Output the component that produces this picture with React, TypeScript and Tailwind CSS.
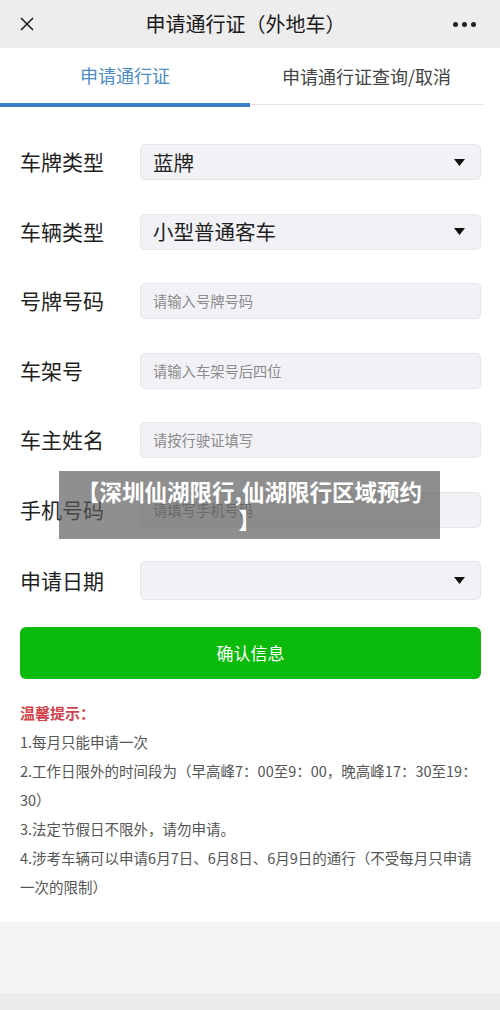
import { X } from "lucide-react"

const FONT = { fontFamily: '"Noto Sans CJK SC", "Noto Sans", sans-serif' }

type Row = {
  label: string
  kind: "select" | "input"
  value?: string
  placeholder?: string
}

const ROWS: Row[] = [
  { label: "车牌类型", kind: "select", value: "蓝牌" },
  { label: "车辆类型", kind: "select", value: "小型普通客车" },
  { label: "号牌号码", kind: "input", placeholder: "请输入号牌号码" },
  { label: "车架号", kind: "input", placeholder: "请输入车架号后四位" },
  { label: "车主姓名", kind: "input", placeholder: "请按行驶证填写" },
  { label: "手机号码", kind: "input", placeholder: "请填写手机号码" },
  { label: "申请日期", kind: "select", value: "" },
]

function Caret() {
  return (
    <svg width="11" height="7" viewBox="0 0 11 7" className="shrink-0">
      <path d="M0 0 L11 0 L5.5 7 Z" fill="#111" />
    </svg>
  )
}

function FormRow({ row, last }: { row: Row; last: boolean }) {
  return (
    <div className="flex items-center">
      <div className="w-[120px] shrink-0 text-[21px] text-[#1f1f1f]">{row.label}</div>
      <div
        className={`flex flex-1 items-center justify-between rounded-[5px] border border-[#e6e6ec] bg-[#f2f2f6] pl-[12px] pr-[15px] ${
          last ? "h-[39px]" : "h-[36px]"
        }`}
      >
        {row.kind === "select" ? (
          <>
            <span className="text-[20.5px] text-[#1f1f1f]">{row.value}</span>
            <Caret />
          </>
        ) : (
          <span className="text-[14.3px] text-[#8a8a8a]">{row.placeholder}</span>
        )}
      </div>
    </div>
  )
}

export default function App() {
  return (
    <div className="relative flex h-[1010px] w-[500px] flex-col overflow-hidden bg-white" style={FONT}>
      {/* Top bar */}
      <div className="flex h-[48px] shrink-0 items-center justify-between bg-[#ededed] px-[16px]">
        <X className="h-[22px] w-[22px] text-[#222]" strokeWidth={1.8} />
        <div className="text-[20px] text-[#1a1a1a]">申请通行证（外地车）</div>
        <div className="flex gap-[4px] pr-[8px]">
          <span className="h-[5px] w-[5px] rounded-full bg-[#222]" />
          <span className="h-[5px] w-[5px] rounded-full bg-[#222]" />
          <span className="h-[5px] w-[5px] rounded-full bg-[#222]" />
        </div>
      </div>

      {/* Tabs */}
      <div className="flex h-[59px] shrink-0 pr-[17px]">
        <div className="flex w-[250px] flex-col">
          <div className="flex flex-1 items-center justify-center text-[18px] text-[#4b8cc6]">
            申请通行证
          </div>
          <div className="h-[4px] bg-[#3e7ec8]" />
        </div>
        <div className="flex flex-1 flex-col">
          <div className="flex flex-1 items-center justify-center text-[18px] text-[#444]">
            申请通行证查询/取消
          </div>
          <div className="h-[1px] bg-[#e3e3e3]" />
          <div className="h-[2px]" />
        </div>
      </div>

      {/* Form */}
      <div className="flex flex-col gap-[33.5px] px-[20px] pt-[37px] pr-[19px]">
        {ROWS.map((row, i) => (
          <FormRow key={row.label} row={row} last={i === ROWS.length - 1} />
        ))}
      </div>

      <div className="px-[20px] pr-[19px] pt-[27px]">
        <button
          type="button"
          className="flex h-[52px] w-full items-center justify-center rounded-[6px] bg-[#0bbb0b] text-[17px] text-white"
        >
          确认信息
        </button>
      </div>

      {/* Notes */}
      <div className="flex-1 px-[20px] pt-[19px] text-[14.5px] leading-[29px] text-[#555]">
        <div className="text-[15px] font-bold text-[#d2424b]">温馨提示：</div>
        <div className="whitespace-nowrap">1.每月只能申请一次</div>
        <div className="whitespace-nowrap">2.工作日限外的时间段为（早高峰7：00至9：00，晚高峰17：30至19：</div>
        <div className="whitespace-nowrap">30）</div>
        <div className="whitespace-nowrap">3.法定节假日不限外，请勿申请。</div>
        <div className="whitespace-nowrap">4.涉考车辆可以申请6月7日、6月8日、6月9日的通行（不受每月只申请</div>
        <div className="whitespace-nowrap">一次的限制）</div>
      </div>

      <div className="h-[71px] shrink-0 bg-[#f5f5f5]" />
      <div className="h-[17px] shrink-0 bg-[#ebebeb]" />

      {/* Caption overlay */}
      <div className="absolute left-[59px] top-[471px] flex h-[68px] w-[381px] flex-col items-center justify-center whitespace-nowrap bg-[rgba(90,90,90,0.68)] text-center text-[22.5px] font-bold leading-[28px] text-white">
        <span>【深圳仙湖限行,仙湖限行区域预约</span>
        <span>】</span>
      </div>
    </div>
  )
}
